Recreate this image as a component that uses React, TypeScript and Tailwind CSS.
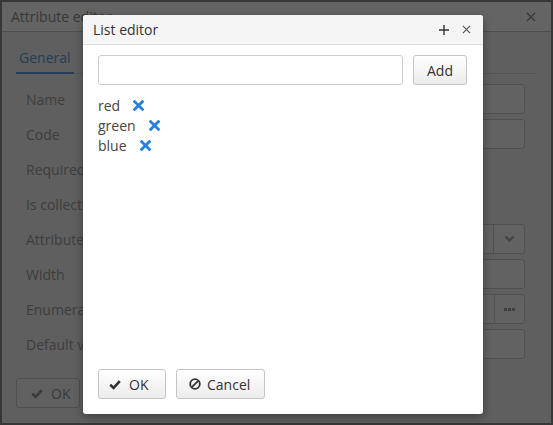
import React from "react";

const font = { fontFamily: '"Open Sans", "Noto Sans", sans-serif' };

function Cross({ className = "" }: { className?: string }) {
  return (
    <svg width="11" height="11" viewBox="0 0 10 10" className={className}>
      <path d="M1.5 1.5 L8.5 8.5 M8.5 1.5 L1.5 8.5" stroke="currentColor" strokeWidth="2.6" strokeLinecap="square" />
    </svg>
  );
}

function Check({ className = "" }: { className?: string }) {
  return (
    <svg width="12" height="11" viewBox="0 0 12 11" className={className}>
      <path d="M1.2 5.8 L4.6 9 L10.8 2.2" stroke="currentColor" strokeWidth="2.6" fill="none" />
    </svg>
  );
}

function Ban() {
  return (
    <svg width="12" height="12" viewBox="0 0 12 12">
      <circle cx="6" cy="6" r="4.8" stroke="currentColor" strokeWidth="1.8" fill="none" />
      <path d="M9.2 2.8 L2.8 9.2" stroke="currentColor" strokeWidth="1.8" />
    </svg>
  );
}

function ThinX({ size = 9 }: { size?: number }) {
  return (
    <svg width={size} height={size} viewBox="0 0 10 10">
      <path d="M1 1 L9 9 M9 1 L1 9" stroke="currentColor" strokeWidth="1.3" />
    </svg>
  );
}

function FieldRow({ label, kind }: { label: string; kind?: "input" | "select" | "picker" | "none" }) {
  return (
    <div className="flex h-[30px] items-center">
      <span className="w-[134px] shrink-0 text-[#9b9b9b]">{label}</span>
      {kind === "input" && <div className="h-full flex-1 rounded-[3px] border border-[#c8c8c8] bg-[#f4f4f4]" />}
      {kind === "select" && (
        <div className="flex h-full flex-1 rounded-[3px] border border-[#c8c8c8] bg-[#f4f4f4]">
          <div className="flex-1" />
          <div className="flex w-[31px] items-center justify-center border-l border-[#c8c8c8] text-[#aaaaaa]">
            <svg width="11" height="8" viewBox="0 0 11 8">
              <path d="M1.5 1.5 L5.5 5.5 L9.5 1.5" stroke="currentColor" strokeWidth="2.4" fill="none" />
            </svg>
          </div>
        </div>
      )}
      {kind === "picker" && (
        <div className="flex h-full flex-1 rounded-[3px] border border-[#c8c8c8] bg-[#f4f4f4]">
          <div className="flex-1" />
          <div className="flex w-[30px] items-center justify-center gap-[1px] border-l border-[#c8c8c8]">
            <span className="h-[3px] w-[3px] bg-[#a0a0a0]" />
            <span className="h-[3px] w-[3px] bg-[#a0a0a0]" />
            <span className="h-[3px] w-[3px] bg-[#a0a0a0]" />
          </div>
        </div>
      )}
    </div>
  );
}

export default function App() {
  const items = ["red", "green", "blue"];

  return (
    <div className="relative h-[425px] w-[553px] overflow-hidden text-[14px]" style={font}>
      {/* underlying window */}
      <div className="flex h-full flex-col border-2 border-[#8a8a8a] bg-[#ededed]">
        <div className="flex h-[30px] shrink-0 items-center justify-between border-b border-[#c0c0c0] bg-[#fafafa] pl-[9px] pr-[15px] text-[#8c8c8c]">
          <span>Attribute editor</span>
          <ThinX size={10} />
        </div>
        <div className="flex flex-1 flex-col pl-[14px] pr-[15px]">
          <div className="mt-[10px] flex border-b border-[#d5d5d5]">
            <div className="-mb-px flex h-[32px] items-center border-b-2 border-[#5b9bd5] px-[3px] text-[#5b9bd5]">
              General
            </div>
          </div>
          <div className="mt-[10px] flex flex-col gap-[5px] pl-[10px] pr-[11px]">
            <FieldRow label="Name" kind="input" />
            <FieldRow label="Code" kind="input" />
            <FieldRow label="Required" kind="none" />
            <FieldRow label="Is collection" kind="none" />
            <FieldRow label="Attribute type" kind="select" />
            <FieldRow label="Width" kind="input" />
            <FieldRow label="Enumeration" kind="picker" />
            <FieldRow label="Default value" kind="input" />
          </div>
          <div className="mt-auto pb-[15px]">
            <div className="flex h-[30px] w-[64px] items-center gap-[8px] rounded-[3px] border border-[#c8c8c8] bg-[#f0f0f0] pl-[14px] text-[#939393]">
              <Check />
              <span>OK</span>
            </div>
          </div>
        </div>
      </div>

      {/* backdrop */}
      <div className="absolute inset-0 bg-black/60" />

      {/* modal */}
      <div className="absolute left-[83px] top-[15px] flex h-[399px] w-[400px] flex-col overflow-hidden rounded-[3px] bg-white shadow-[0_3px_10px_rgba(0,0,0,0.35)]">
        <div className="flex h-[30px] shrink-0 items-center justify-between border-b border-[#dddddd] bg-[#f5f5f5] pl-[10px] pr-[12px] text-[#333333]">
          <span>List editor</span>
          <div className="flex items-center gap-[13px]">
            <svg width="10" height="10" viewBox="0 0 10 10">
              <path d="M5 0 V10 M0 5 H10" stroke="#333333" strokeWidth="1.4" />
            </svg>
            <span className="text-[#555555]">
              <ThinX size={9} />
            </span>
          </div>
        </div>
        <div className="flex flex-1 flex-col px-[15px] pt-[10px] pb-[15px]">
          <div className="flex h-[30px] gap-[10px]">
            <input className="h-full w-[305px] rounded-[3px] border border-[#cccccc] px-[8px] outline-none" />
            <button className="h-full w-[54px] rounded-[3px] border border-[#c4c4c4] bg-gradient-to-b from-white to-[#ececec] text-[#333333]">
              Add
            </button>
          </div>
          <ul className="mt-[10px] flex flex-col">
            {items.map((item) => (
              <li key={item} className="flex h-[20px] items-center gap-[13px] text-[#444444]">
                <span>{item}</span>
                <Cross className="text-[#2382df]" />
              </li>
            ))}
          </ul>
          <div className="mt-auto flex gap-[10px]">
            <button className="flex h-[30px] w-[68px] items-center gap-[8px] rounded-[3px] border border-[#c4c4c4] bg-gradient-to-b from-white to-[#ececec] pl-[10px] text-[#333333]">
              <Check />
              <span>OK</span>
            </button>
            <button className="flex h-[30px] w-[89px] items-center gap-[6px] rounded-[3px] border border-[#c4c4c4] bg-gradient-to-b from-white to-[#ececec] pl-[12px] text-[#333333]">
              <Ban />
              <span>Cancel</span>
            </button>
          </div>
        </div>
      </div>
    </div>
  );
}
